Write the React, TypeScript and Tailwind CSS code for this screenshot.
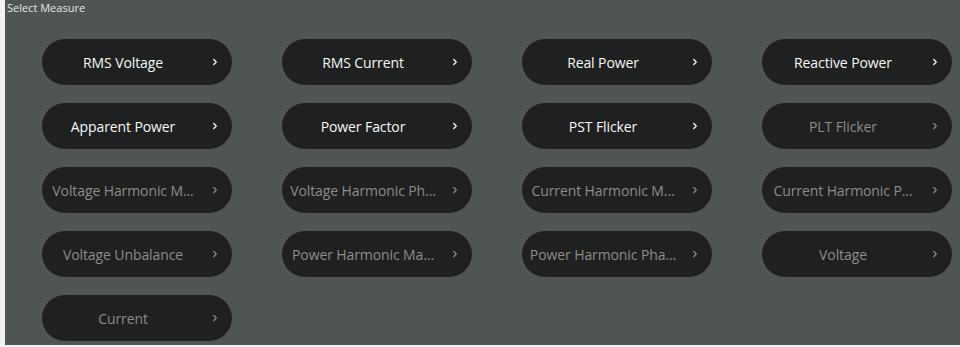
import { ChevronRight } from 'lucide-react';

type Measure = { label: string; enabled: boolean };

// labels as shown on the device, already shortened to fit the pill
const measures: Measure[] = [
  { label: 'RMS Voltage', enabled: true },
  { label: 'RMS Current', enabled: true },
  { label: 'Real Power', enabled: true },
  { label: 'Reactive Power', enabled: true },
  { label: 'Apparent Power', enabled: true },
  { label: 'Power Factor', enabled: true },
  { label: 'PST Flicker', enabled: true },
  { label: 'PLT Flicker', enabled: false },
  { label: 'Voltage Harmonic M...', enabled: false },
  { label: 'Voltage Harmonic Ph...', enabled: false },
  { label: 'Current Harmonic M...', enabled: false },
  { label: 'Current Harmonic P...', enabled: false },
  { label: 'Voltage Unbalance', enabled: false },
  { label: 'Power Harmonic Ma...', enabled: false },
  { label: 'Power Harmonic Pha...', enabled: false },
  { label: 'Voltage', enabled: false },
  { label: 'Current', enabled: false },
];

export default function App() {
  return (
    <div className="h-[347px] w-[960px] bg-[#f2f2f2] font-['Open_Sans',sans-serif]">
      <div className="ml-[5px] h-[345px] bg-[#4f5553]">
        <div className="h-[39px] pl-[2px] pt-[1px] text-[11px] leading-[14px] text-[#e6e6e6]">
          Select Measure
        </div>
        <div className="grid grid-cols-[repeat(4,190px)] gap-x-[50px] gap-y-[18px] pl-[37px]">
          {measures.map((m) => (
            <button
              key={m.label}
              className="flex h-[46px] items-center rounded-full bg-[#1f2020] pl-[6px] pr-[12px]"
            >
              <span
                className={
                  'flex-1 whitespace-nowrap text-center text-[14px] tracking-[-0.1px] ' +
                  (m.enabled ? 'font-medium text-[#f7f7f7]' : 'text-[#8b8d8c]')
                }
              >
                {m.label}
              </span>
              <ChevronRight
                className={'ml-[12px] h-[10px] w-[10px] shrink-0 ' + (m.enabled ? 'text-white' : 'text-[#8b8d8c]')}
                strokeWidth={3}
              />
            </button>
          ))}
        </div>
      </div>
    </div>
  );
}
